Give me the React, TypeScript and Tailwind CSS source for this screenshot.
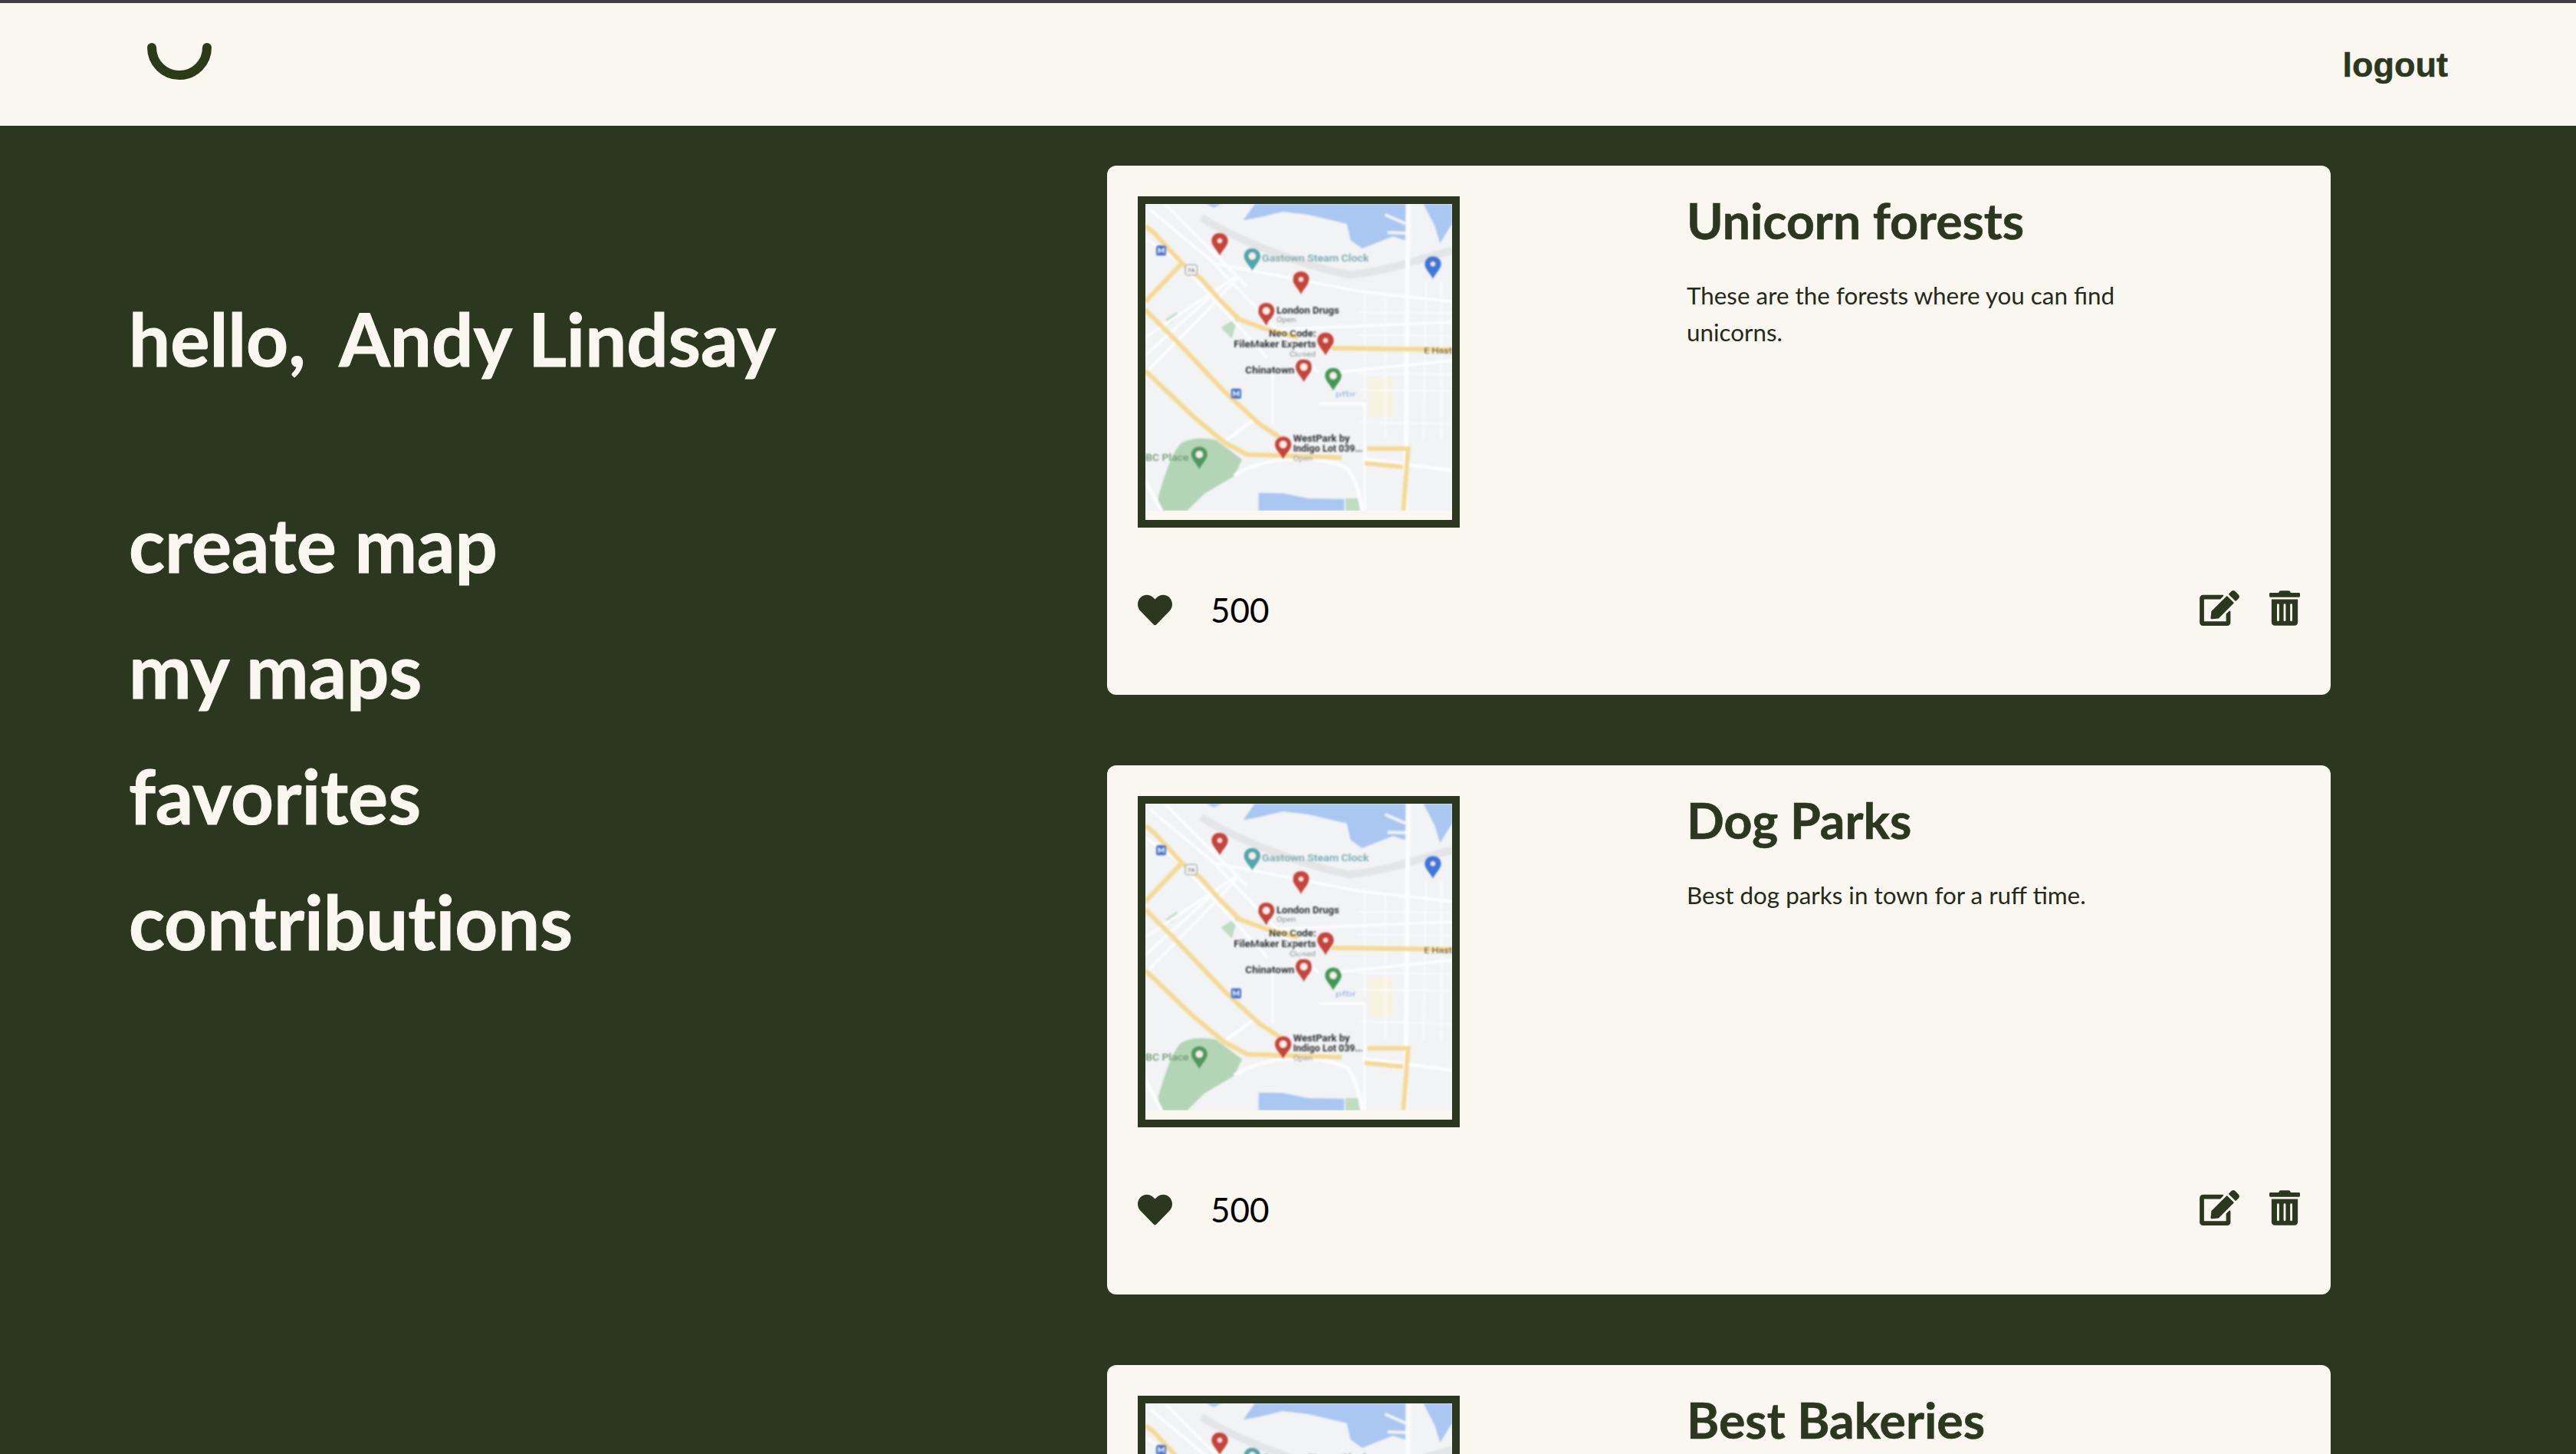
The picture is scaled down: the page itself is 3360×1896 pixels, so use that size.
import { FaEdit, FaHeart, FaTrashAlt } from 'react-icons/fa';

const maps = [
  {
    title: 'Unicorn forests',
    description: 'These are the forests where you can find unicorns.',
    likes: 500,
  },
  {
    title: 'Dog Parks',
    description: 'Best dog parks in town for a ruff time.',
    likes: 500,
  },
  {
    title: 'Best Bakeries',
    description: 'The best bakeries around.',
    likes: 500,
  },
];

const navLinks = ['create map', 'my maps', 'favorites', 'contributions'];

const pinPath = 'M0 -45 C-19 -45 -32 -31 -32 -14 C-32 6 -10 22 0 44 C10 22 32 6 32 -14 C32 -31 19 -45 0 -45 Z';

function Pin({ x, y, color, glyph = 'dot' }: { x: number; y: number; color: string; glyph?: 'dot' | 'wide' }) {
  return (
    <g transform={`translate(${x} ${y})`}>
      <path d={pinPath} fill={color} />
      {glyph === 'dot' ? (
        <circle cx="0" cy="-14" r="9" fill="#fbe3dc" />
      ) : (
        <circle cx="0" cy="-14" r="14" fill="#fbeee9" />
      )}
    </g>
  );
}

function MapLabel({ x, y, size, color, weight, width, children }: {
  x: number;
  y: number;
  size: number;
  color: string;
  weight: number;
  width: number;
  children: string;
}) {
  return (
    <text x={x} y={y} fontSize={size} fill={color} fontWeight={weight} textLength={width} lengthAdjust="spacingAndGlyphs" fontFamily="Roboto, sans-serif">
      {children}
    </text>
  );
}

function MapThumbnail() {
  return (
    <svg viewBox="162 198 1200 1200" className="block w-[400px] h-[400px]">
      <defs>
        <filter id="soft" x="-5%" y="-5%" width="110%" height="110%">
          <feGaussianBlur stdDeviation="3.8" />
        </filter>
      </defs>
      <rect x="162" y="198" width="1200" height="1200" fill="#f1f3f4" />
      <g filter="url(#soft)">
        <path d="M400 198 L460 198 L430 212 Z M545 262 L590 198 L1190 198 L1195 345 L1130 325 L1010 372 L965 340 L950 275 L800 240 L700 228 L610 250 Z" fill="#aac7f2" />
        <path d="M1250 198 L1362 198 L1362 275 L1315 352 L1295 285 Z" fill="#aac7f2" />
        <path d="M605 1328 L700 1330 L800 1350 L940 1352 L940 1398 L605 1398 Z" fill="#aac7f2" />
        <path d="M1100 240 L1180 275 M1110 310 L1190 312" stroke="#f1f3f4" strokeWidth="12" fill="none" />
        <path d="M380 250 C520 340 780 440 960 475 C1120 460 1240 410 1362 380" stroke="#e3e5e7" strokeWidth="30" fill="none" />
        <path d="M212 1345 C235 1270 260 1180 300 1135 C340 1110 400 1112 440 1122 L540 1198 L510 1262 L395 1330 L325 1398 L215 1398 Z" fill="#b4d5b5" />
        <path d="M458 682 L525 640 L500 725 Z M240 650 L285 620 L290 640 L260 665 Z M945 1350 L1002 1350 L1002 1398 L945 1398 Z" fill="#c0dcc3" />
        <path d="M1030 880 L1130 880 L1130 1030 L1040 1030 Z" fill="#f8f3e0" />

        <g stroke="#fdfdfe" fill="none" strokeWidth="11">
          <path d="M180 220 L420 420 L840 860 M162 330 L300 430 L640 800 M162 720 L520 480 M162 860 L380 640 L520 490 M162 790 L450 530 M240 200 L560 520" />
          <path d="M430 430 L1000 540 L1362 580 M640 690 L1362 660 M880 860 L1362 810 M660 860 L660 1060 M840 980 L1020 980 L1020 1398" />
          <path d="M162 1280 L225 1398 M480 1120 L590 1040 M510 1260 C620 1190 820 1170 950 1230 C990 1280 1000 1340 1010 1398 M1010 1195 L1362 1240" strokeWidth="14" />
          <path d="M1020 530 L1020 960 M1100 560 L1100 1120 M1260 500 L1250 1120 M1320 500 L1320 1120 M990 620 L1362 625 M990 710 L1362 715 M990 860 L1362 865 M1000 925 L1362 930 M1000 1050 L1362 1060" strokeWidth="6" opacity="0.8" />
          <path d="M1190 198 L1180 1398" strokeWidth="18" />
        </g>
        <g stroke="#f5da96" fill="none" strokeWidth="18">
          <path d="M162 285 L195 310 L305 430 L380 490 L450 570 L530 650 L640 690 L760 720" />
          <path d="M305 430 L162 580" />
          <path d="M162 612 L280 730 L470 930 L610 1060 L690 1112" />
          <path d="M162 850 L350 1030 L470 1130 L560 1178 L930 1190" />
          <path d="M890 762 L1362 768" />
          <path d="M1030 1155 L1190 1155 L1172 1398" />
          <path d="M1020 1212 L1170 1226" />
        </g>

        <rect x="204" y="360" width="40" height="40" rx="7" fill="#4277c9" />
        <path d="M214 390 L214 372 L224 384 L234 372 L234 390" stroke="#f4f7fd" strokeWidth="4" fill="none" />
        <rect x="497" y="920" width="40" height="40" rx="7" fill="#4277c9" />
        <path d="M507 950 L507 932 L517 944 L527 932 L527 950" stroke="#f4f7fd" strokeWidth="4" fill="none" />
        <rect x="318" y="436" width="46" height="40" rx="8" fill="#f4f4f4" stroke="#8a8a8a" strokeWidth="3" />
        <MapLabel x={326} y={464} size={24} color="#666" weight={500} width={30}>7A</MapLabel>

        <Pin x={453} y={356} color="#c4443a" />
        <Pin x={771} y={507} color="#c4443a" />
        <Pin x={867} y={746} color="#c4443a" />
        <Pin x={635} y={630} color="#c4443a" glyph="wide" />
        <Pin x={782} y={850} color="#c4443a" glyph="wide" />
        <Pin x={701} y={1153} color="#c4443a" glyph="wide" />
        <Pin x={580} y={416} color="#4fa6ad" glyph="wide" />
        <Pin x={1287} y={447} color="#3d78d8" />
        <Pin x={897} y={884} color="#3f9a56" glyph="wide" />
        <Pin x={373} y={1192} color="#4c9a5e" glyph="wide" />

        <MapLabel x={618} y={424} size={38} color="#6fa6a8" weight={500} width={418}>Gastown Steam Clock</MapLabel>
        <MapLabel x={675} y={626} size={40} color="#333333" weight={700} width={245}>London Drugs</MapLabel>
        <MapLabel x={675} y={660} size={28} color="#8f8f8f" weight={400} width={76}>Open</MapLabel>
        <MapLabel x={645} y={718} size={38} color="#333333" weight={700} width={185}>Neo Code:</MapLabel>
        <MapLabel x={508} y={758} size={38} color="#333333" weight={700} width={322}>FileMaker Experts</MapLabel>
        <MapLabel x={726} y={794} size={28} color="#8f8f8f" weight={400} width={102}>Closed</MapLabel>
        <MapLabel x={553} y={862} size={40} color="#333333" weight={700} width={192}>Chinatown</MapLabel>
        <MapLabel x={740} y={1128} size={38} color="#333333" weight={700} width={222}>WestPark by</MapLabel>
        <MapLabel x={740} y={1168} size={38} color="#333333" weight={700} width={275}>Indigo Lot 039...</MapLabel>
        <MapLabel x={740} y={1204} size={28} color="#8f8f8f" weight={400} width={76}>Open</MapLabel>
        <MapLabel x={1252} y={784} size={34} color="#6b5c3a" weight={500} width={110}>E Hast</MapLabel>
        <MapLabel x={162} y={1204} size={36} color="#6b9a72" weight={500} width={170}>BC Place</MapLabel>
        <MapLabel x={906} y={952} size={26} color="#8fb1e3" weight={400} width={80}>pfbr</MapLabel>
      </g>
    </svg>
  );
}

function MapCard({ title, description, likes }: { title: string; description: string; likes: number }) {
  return (
    <div className="bg-[#faf7f0] rounded-xl pt-10 px-10 pb-[90px] text-[#2b371e]">
      <div className="flex">
        <div className="w-[716px] shrink-0">
          <div className="w-[420px] h-[432px] border-[10px] border-[#2b371e]">
            <MapThumbnail />
          </div>
        </div>
        <div>
          <h2 className="-mt-0.5 mb-0.5 text-[64.4px] leading-[66px] font-bold [-webkit-text-stroke:0.6px_#2b371e]">{title}</h2>
          <p className="mt-[41px] w-[600px] text-[31.4px] leading-[48px] text-[#232b18] [font-variant-ligatures:common-ligatures]">{description}</p>
        </div>
      </div>
      <div className="mt-[82px] h-[46px] flex items-center justify-between">
        <div className="flex items-center mt-1">
          <FaHeart className="text-[45px]" />
          <span className="ml-[50px] text-[44px] text-black">{likes}</span>
        </div>
        <div className="flex items-center gap-[39px]">
          <FaEdit className="w-[52px] h-[46px]" />
          <FaTrashAlt className="w-10 h-[46px]" />
        </div>
      </div>
    </div>
  );
}

export default function App() {
  return (
    <div className="h-screen overflow-hidden flex flex-col bg-[#2b371e] font-['Lato',sans-serif] [font-variant-ligatures:none]">
      <header className="h-[164px] shrink-0 border-t-4 border-[#3f3f3f] bg-[#faf7f0] flex items-start justify-between pl-[192px] pr-[167px]">
        <svg width="84" height="49" viewBox="0 0 84 49" className="mt-[51px]">
          <path d="M6 7 A36 36 0 0 0 78 7" fill="none" stroke="#2b3a17" strokeWidth="12" strokeLinecap="round" />
        </svg>
        <a className="mt-[55px] font-['Liberation_Sans',sans-serif] font-bold text-[45px] leading-[52px] text-[#2b371e] [-webkit-text-stroke:0.5px_#2b371e]">logout</a>
      </header>

      <div className="flex flex-1 min-h-0">
        <aside className="w-[1444px] shrink-0 pl-[168px] pt-[219px] text-[#faf7f0] font-bold [-webkit-text-stroke:1px_#faf7f0]">
          <p className="text-[96px] leading-[115px] whitespace-pre">hello,  Andy Lindsay</p>
          <nav className="mt-[130px] flex flex-col">
            {navLinks.map((link) => (
              <a key={link} className="text-[97.5px] leading-[164px]">{link}</a>
            ))}
          </nav>
        </aside>

        <main className="w-[1596px] shrink-0 pt-[52px] flex flex-col gap-[92px]">
          {maps.map((map) => (
            <MapCard key={map.title} {...map} />
          ))}
        </main>
      </div>
    </div>
  );
}
